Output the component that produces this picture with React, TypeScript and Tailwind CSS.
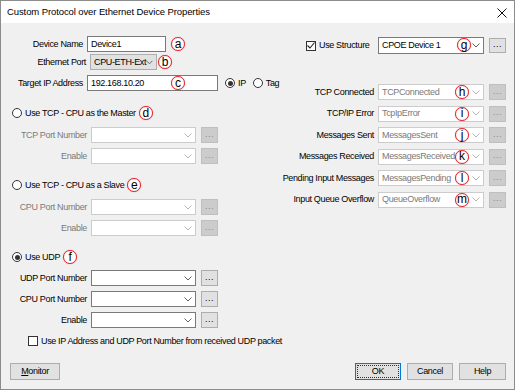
import type { ReactNode } from "react";

const font = "font-['Liberation_Sans',Arial,sans-serif]";

export default function App() {
  return (
    <div
      className={`flex h-[390px] w-[515px] flex-col border border-[#8c8c8c] bg-[#f0f0f0] text-[9px] leading-none tracking-[-0.35px] text-black ${font}`}
    >
      <div className="flex h-[22px] shrink-0 items-center justify-between bg-white pl-[6px] pr-[7px]">
        <span className="text-[9.5px] tracking-[-0.1px]">Custom Protocol over Ethernet Device Properties</span>
        <svg width="10" height="10" viewBox="0 0 10 10" className="mt-[1px]">
          <path d="M0.5 0.5 L9.5 9.5 M9.5 0.5 L0.5 9.5" stroke="#111" strokeWidth="1" />
        </svg>
      </div>

      <div className="flex">
        <div className="flex w-[289px] flex-col pt-[13px]">
          <div className="flex h-[16px] items-center">
            <Label className="w-[82px]">Device Name</Label>
            <Combo className="ml-[4px] h-[16px] w-[79px]" value="Device1" chevron={false} />
            <Callout className="ml-[5px]">a</Callout>
          </div>
          <div className="mt-[2px] flex h-[16px] items-center">
            <Label className="w-[85px]">Ethernet Port</Label>
            <div className="ml-[4px] flex h-[16px] w-[67px] items-center border border-[#adadad] bg-[#e1e1e1] pl-[3px]">
              <span className="whitespace-nowrap">CPU-ETH-Ext</span>
              <Chevron className="ml-auto mr-[3px]" color="#555" />
            </div>
            <Callout className="ml-[1px]">b</Callout>
          </div>
          <div className="mt-[5px] flex h-[16px] items-center">
            <Label className="w-[82px]">Target IP Address</Label>
            <Combo
              className="ml-[4px] h-[16px] w-[131px]"
              value="192.168.10.20"
              chevron={false}
              callout="c"
              calloutClass="left-[83px]"
            />
            <Radio checked className="ml-[7px]" />
            <span className="ml-[3px]">IP</span>
            <Radio className="ml-[7px]" />
            <span className="ml-[3px]">Tag</span>
          </div>

          <RadioRow className="mt-[15px]" label="Use TCP - CPU as the Master" callout="d" />
          <FieldRow className="mt-[7px]" label="TCP Port Number" disabled />
          <FieldRow className="mt-[5px]" label="Enable" disabled />

          <RadioRow className="mt-[14px]" label="Use TCP - CPU as a Slave" callout="e" />
          <FieldRow className="mt-[7px]" label="CPU Port Number" disabled />
          <FieldRow className="mt-[5px]" label="Enable" disabled />

          <RadioRow className="mt-[14px]" label="Use UDP" callout="f" checked />
          <FieldRow className="mt-[6px]" label="UDP Port Number" />
          <FieldRow className="mt-[5px]" label="CPU Port Number" />
          <FieldRow className="mt-[5px]" label="Enable" />

          <div className="mt-[7px] flex h-[12px] items-center whitespace-nowrap pl-[27px]">
            <Checkbox />
            <span className="ml-[3px]">Use IP Address and UDP Port Number from received UDP packet</span>
          </div>
        </div>

        <div className="flex flex-1 flex-col pt-[14px]">
          <div className="flex h-[17px] items-center">
            <div className="flex w-[88px] items-center pl-[16px]">
              <Checkbox checked />
              <span className="ml-[3px] whitespace-nowrap">Use Structure</span>
            </div>
            <Combo
              className="h-[17px] w-[106px]"
              value="CPOE Device 1"
              callout="g"
              calloutClass="left-[78px]"
            />
            <DotsButton className="ml-[5px] h-[15px]" />
          </div>

          <div className="mt-[30px] flex flex-col gap-[5.5px]">
            <StatusRow label="TCP Connected" value="TCPConnected" callout="h" />
            <StatusRow label="TCP/IP Error" value="TcpIpError" callout="i" />
            <StatusRow label="Messages Sent" value="MessagesSent" callout="j" />
            <StatusRow label="Messages Received" value="MessagesReceived" callout="k" />
            <StatusRow label="Pending Input Messages" value="MessagesPending" callout="l" />
            <StatusRow label="Input Queue Overflow" value="QueueOverflow" callout="m" />
          </div>
        </div>
      </div>

      <div className="mt-[16px] flex pl-[9px] pr-[8px]">
        <Button className="w-[50px]">
          <span className="underline">M</span>onitor
        </Button>
        <button className="ml-auto flex h-[17px] w-[46px] items-center justify-center border border-[#0078d7] bg-[#e1e1e1] p-[1px]">
          <span className="flex h-full w-full items-center justify-center border border-dotted border-[#333]">
            OK
          </span>
        </button>
        <Button className="ml-[6px] w-[46px]">Cancel</Button>
        <Button className="ml-[6px] w-[47px]">Help</Button>
      </div>
    </div>
  );
}

function Label({ className, disabled, children }: { className: string; disabled?: boolean; children: ReactNode }) {
  return (
    <div className={`flex shrink-0 justify-end ${disabled ? "text-[#7a7a7a]" : "text-black"} ${className}`}>
      <span className="whitespace-nowrap">{children}</span>
    </div>
  );
}

function Callout({ className, children }: { className?: string; children: ReactNode }) {
  return (
    <span
      className={`flex h-[14px] w-[14px] shrink-0 items-center justify-center rounded-full border-[1.5px] border-[#e3262b] bg-white pb-[1px] text-[12px] leading-none tracking-normal text-black shadow-[0_0_1px_rgba(227,38,43,0.6)] ${className ?? ""}`}
    >
      {children}
    </span>
  );
}

function Chevron({ className, color }: { className?: string; color: string }) {
  return (
    <svg width="8" height="5" viewBox="0 0 8 5" className={className}>
      <path d="M0.5 0.5 L4 4 L7.5 0.5" fill="none" stroke={color} strokeWidth="1" />
    </svg>
  );
}

type ComboProps = {
  className: string;
  value?: string;
  disabled?: boolean;
  chevron?: boolean;
  callout?: string;
  calloutClass?: string;
};

function Combo({ className, value, disabled, chevron = true, callout, calloutClass }: ComboProps) {
  return (
    <div
      className={`relative flex shrink-0 items-center border bg-white pl-[3px] ${
        disabled ? "border-[#cccccc] text-[#7a7a7a]" : "border-[#7a7a7a] text-black"
      } ${className}`}
    >
      <span className="whitespace-nowrap">{value}</span>
      {chevron ? <Chevron className="ml-auto mr-[3px]" color={disabled ? "#b5b5b5" : "#606060"} /> : null}
      {callout ? <Callout className={`absolute top-[0px] ${calloutClass ?? ""}`}>{callout}</Callout> : null}
    </div>
  );
}

function DotsButton({ className, disabled }: { className?: string; disabled?: boolean }) {
  return (
    <div
      className={`flex w-[17px] shrink-0 items-center justify-center border pb-[2px] text-[9px] tracking-[0.5px] ${
        disabled ? "border-[#bfbfbf] bg-[#cccccc] text-[#8a8a8a]" : "border-[#adadad] bg-[#e1e1e1] text-black"
      } ${className ?? ""}`}
    >
      ...
    </div>
  );
}

function Radio({ checked, className }: { checked?: boolean; className?: string }) {
  return (
    <span
      className={`flex h-[10px] w-[10px] shrink-0 items-center justify-center rounded-full border border-[#333] bg-white ${className ?? ""}`}
    >
      {checked ? <span className="h-[5px] w-[5px] rounded-full bg-[#333]" /> : null}
    </span>
  );
}

function Checkbox({ checked }: { checked?: boolean }) {
  return (
    <span className="flex h-[10px] w-[10px] shrink-0 items-center justify-center border border-[#333] bg-white">
      {checked ? (
        <svg width="8" height="7" viewBox="0 0 8 7">
          <path d="M0.5 3.5 L3 6 L7.5 0.5" fill="none" stroke="#222" strokeWidth="1.1" />
        </svg>
      ) : null}
    </span>
  );
}

function RadioRow({ className, label, callout, checked }: { className: string; label: string; callout: string; checked?: boolean }) {
  return (
    <div className={`flex h-[14px] items-center pl-[11px] ${className}`}>
      <Radio checked={checked} />
      <span className="ml-[3px] whitespace-nowrap">{label}</span>
      <Callout className="ml-[3px]">{callout}</Callout>
    </div>
  );
}

function FieldRow({ className, label, disabled }: { className: string; label: string; disabled?: boolean }) {
  return (
    <div className={`flex h-[16px] items-center ${className}`}>
      <Label className="w-[86px]" disabled={disabled}>
        {label}
      </Label>
      <Combo className="ml-[4px] h-[16px] w-[105px]" disabled={disabled} />
      <DotsButton className="ml-[5px] h-[16px]" disabled={disabled} />
    </div>
  );
}

function StatusRow({ label, value, callout }: { label: string; value: string; callout: string }) {
  return (
    <div className="flex h-[16px] items-center">
      <Label className="w-[84px]">{label}</Label>
      <Combo
        className="ml-[4px] h-[16px] w-[106px]"
        value={value}
        disabled
        callout={callout}
        calloutClass="left-[76px]"
      />
      <DotsButton className="ml-[5px] h-[16px]" disabled />
    </div>
  );
}

function Button({ className, children }: { className: string; children: ReactNode }) {
  return (
    <button className={`flex h-[17px] items-center justify-center border border-[#adadad] bg-[#e1e1e1] ${className}`}>
      {children}
    </button>
  );
}
